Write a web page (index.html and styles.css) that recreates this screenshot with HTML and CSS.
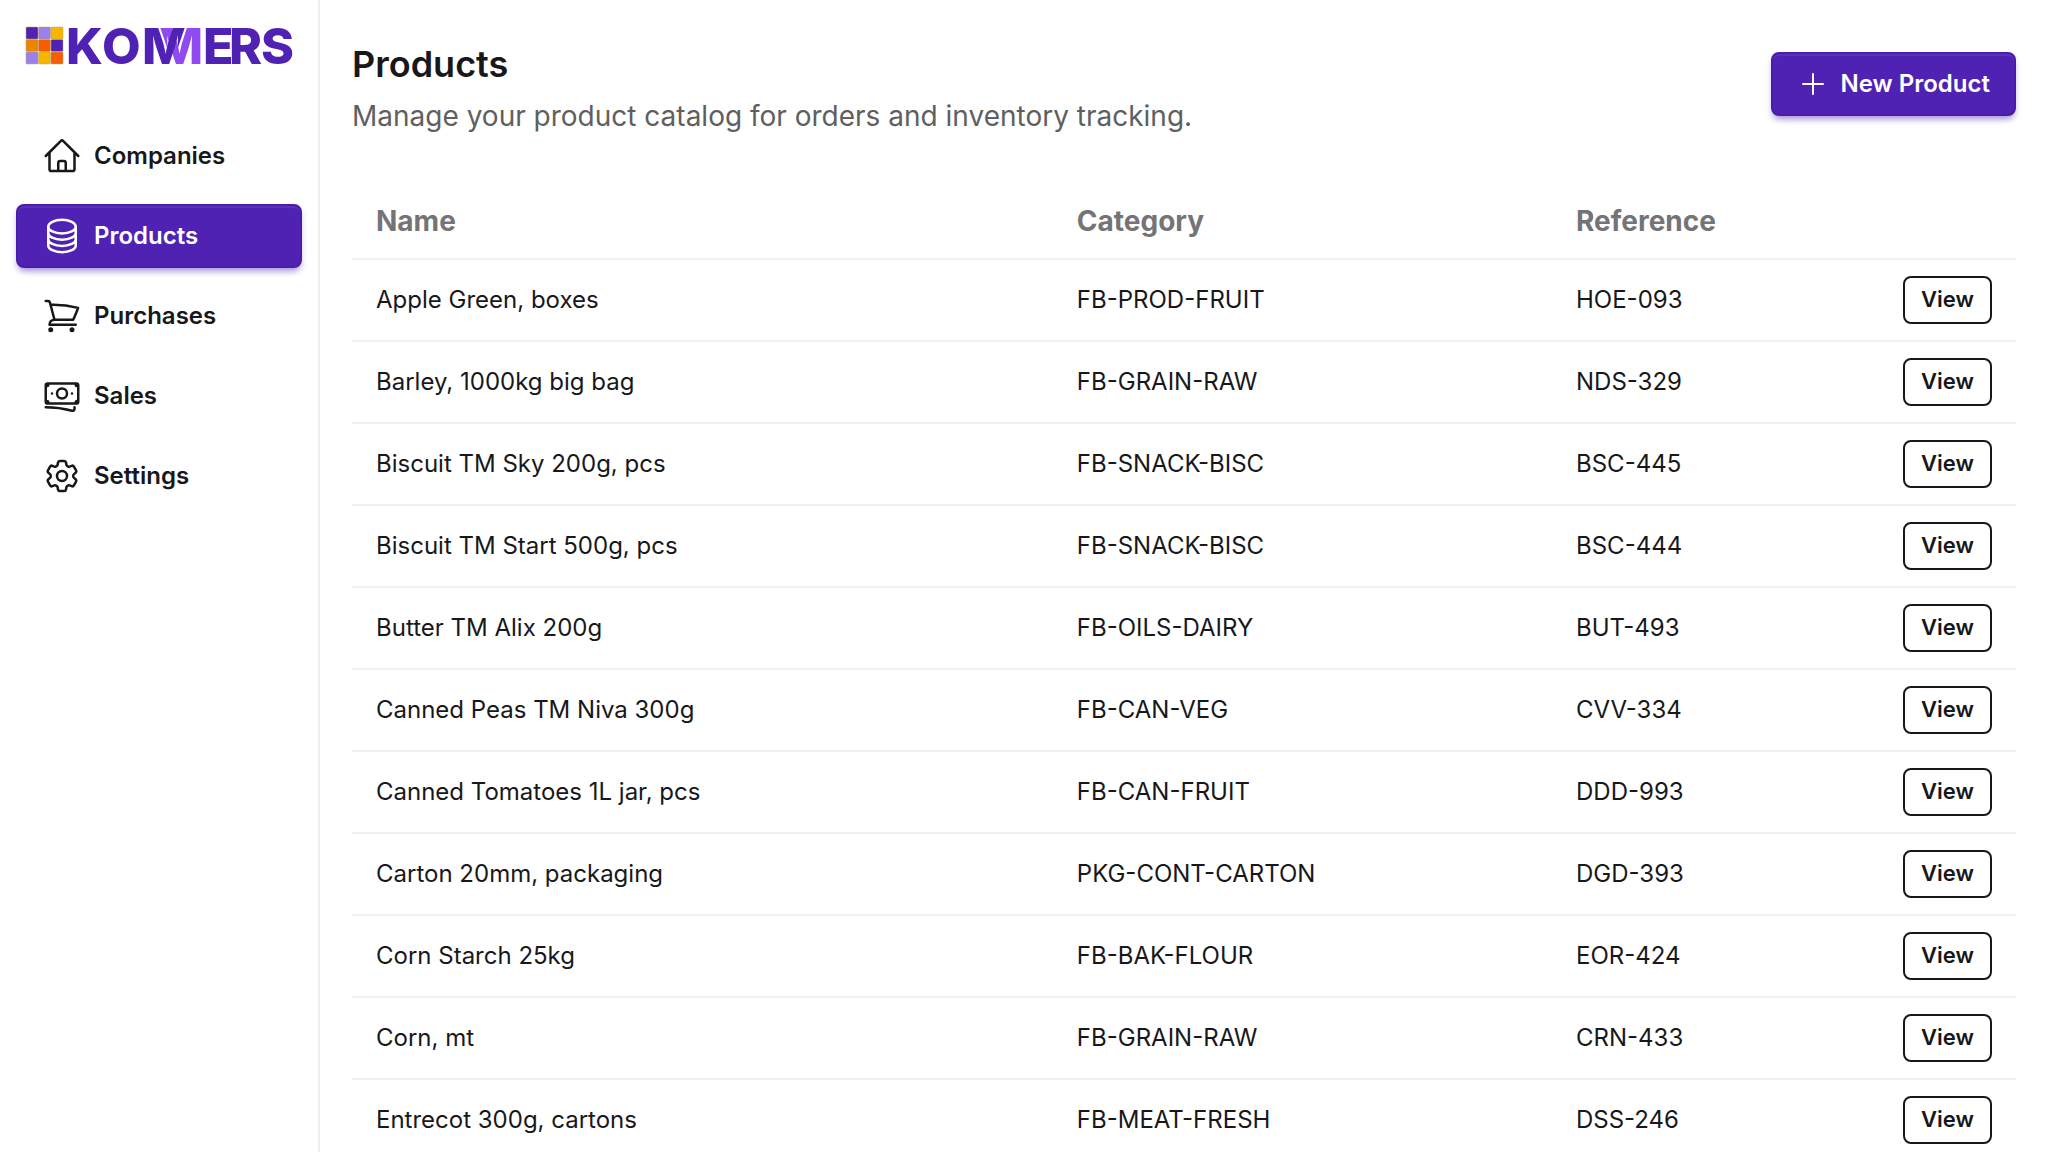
FILE: index.html
```html
<!DOCTYPE html>
<html lang="en">

<head>
    <meta charset="utf-8">
    <meta name="viewport" content="width=device-width, initial-scale=1.0">
    <title>Products - Kommers</title>
    <link rel="stylesheet" href="styles.css">
</head>

<body>
    <aside class="sidebar">
        <a class="logo" href="#" aria-label="Kommers">
            <svg width="270" height="38" viewBox="0 0 270 38">
                <defs>
                    <clipPath id="left-m">
                        <path d="M116 0H159L146 38H116z" />
                    </clipPath>
                    <clipPath id="right-m">
                        <path d="M134 0H178V38H147z" />
                    </clipPath>
                </defs>
                <g stroke="#b9a06a" stroke-width="0.5">
                    <rect x="0" y="0" width="12" height="12" rx="1" fill="#5022b4" />
                    <rect x="12.5" y="0" width="12" height="12" rx="1" fill="#9a80ea" />
                    <rect x="25" y="0" width="12" height="12" rx="1" fill="#f7b500" />
                    <rect x="0" y="12.5" width="12" height="12" rx="1" fill="#ea8500" />
                    <rect x="12.5" y="12.5" width="12" height="12" rx="1" fill="#f65d00" />
                    <rect x="25" y="12.5" width="12" height="12" rx="1" fill="#5022b4" />
                    <rect x="0" y="25" width="12" height="12" rx="1" fill="#9a80ea" />
                    <rect x="12.5" y="25" width="12" height="12" rx="1" fill="#f7b500" />
                    <rect x="25" y="25" width="12" height="12" rx="1" fill="#f65d00" />
                </g>
                <g class="logo-text">
                    <text x="40" y="37">K</text>
                    <text x="76" y="37">O</text>
                    <g clip-path="url(#right-m)"><text class="logo-light" x="130" y="37">M</text></g>
                    <g clip-path="url(#left-m)"><text x="116" y="37">M</text></g>
                    <text x="177" y="37">E</text>
                    <text x="203" y="37">R</text>
                    <text x="235" y="37">S</text>
                </g>
            </svg>
        </a>
        <nav class="menu">
            <a href="#">
                <svg class="icon" viewBox="0 0 24 24"><path d="m2.25 12 8.954-8.955c.44-.439 1.152-.439 1.591 0L21.75 12M4.5 9.75v10.125c0 .621.504 1.125 1.125 1.125H9.75v-4.875c0-.621.504-1.125 1.125-1.125h2.25c.621 0 1.125.504 1.125 1.125V21h4.125c.621 0 1.125-.504 1.125-1.125V9.75M8.25 21h8.25" /></svg>
                Companies
            </a>
            <a class="active" href="#">
                <svg class="icon" viewBox="0 0 24 24"><path d="M20.25 6.375c0 2.278-3.694 4.125-8.25 4.125S3.75 8.653 3.75 6.375m16.5 0c0-2.278-3.694-4.125-8.25-4.125S3.75 4.097 3.75 6.375m16.5 0v11.25c0 2.278-3.694 4.125-8.25 4.125s-8.25-1.847-8.25-4.125V6.375m16.5 0v3.75m-16.5-3.75v3.75m16.5 0v3.75C20.25 16.153 16.556 18 12 18s-8.25-1.847-8.25-4.125v-3.75m16.5 0c0 2.278-3.694 4.125-8.25 4.125s-8.25-1.847-8.25-4.125" /></svg>
                Products
            </a>
            <a href="#">
                <svg class="icon" viewBox="0 0 24 24"><path d="M2.25 3h1.386c.51 0 .955.343 1.087.835l.383 1.437M7.5 14.25a3 3 0 0 0-3 3h15.75m-12.75-3h11.218c1.121-2.3 2.1-4.684 2.924-7.138a60.114 60.114 0 0 0-16.536-1.84M7.5 14.25 5.106 5.272M6 20.25a.75.75 0 1 1-1.5 0 .75.75 0 0 1 1.5 0Zm12.75 0a.75.75 0 1 1-1.5 0 .75.75 0 0 1 1.5 0Z" /></svg>
                Purchases
            </a>
            <a href="#">
                <svg class="icon" viewBox="0 0 24 24"><path d="M2.25 18.75a60.07 60.07 0 0 1 15.797 2.101c.727.198 1.453-.342 1.453-1.096V18.75M3.75 4.5v.75A.75.75 0 0 1 3 6h-.75m0 0v-.375c0-.621.504-1.125 1.125-1.125H20.25M2.25 6v9m18-10.5v.75c0 .414.336.75.75.75h.75m-1.5-1.5h.375c.621 0 1.125.504 1.125 1.125v9.75c0 .621-.504 1.125-1.125 1.125h-.375m1.5-1.5H21a.75.75 0 0 0-.75.75v.75m0 0H3.75m0 0h-.375a1.125 1.125 0 0 1-1.125-1.125V15m1.5 1.5v-.75A.75.75 0 0 0 3 15h-.75M15 10.5a3 3 0 1 1-6 0 3 3 0 0 1 6 0Zm3 0h.008v.008H18V10.5Zm-12 0h.008v.008H6V10.5Z" /></svg>
                Sales
            </a>
            <a href="#">
                <svg class="icon" viewBox="0 0 24 24"><path d="M9.594 3.94c.09-.542.56-.94 1.11-.94h2.593c.55 0 1.02.398 1.11.94l.213 1.281c.063.374.313.686.645.87.074.04.147.083.22.127.325.196.72.257 1.075.124l1.217-.456a1.125 1.125 0 0 1 1.37.49l1.296 2.247a1.125 1.125 0 0 1-.26 1.431l-1.003.827c-.293.241-.438.613-.43.992a7.723 7.723 0 0 1 0 .255c-.008.378.137.75.43.991l1.004.827c.424.35.534.955.26 1.43l-1.298 2.247a1.125 1.125 0 0 1-1.369.491l-1.217-.456c-.355-.133-.75-.072-1.076.124a6.47 6.47 0 0 1-.22.128c-.331.183-.581.495-.644.869l-.213 1.281c-.09.543-.56.94-1.11.94h-2.594c-.55 0-1.019-.398-1.11-.94l-.213-1.281c-.062-.374-.312-.686-.644-.87a6.52 6.52 0 0 1-.22-.127c-.325-.196-.72-.257-1.076-.124l-1.217.456a1.125 1.125 0 0 1-1.369-.49l-1.297-2.247a1.125 1.125 0 0 1 .26-1.431l1.004-.827c.292-.24.437-.613.43-.991a6.932 6.932 0 0 1 0-.255c.007-.38-.138-.751-.43-.992l-1.004-.827a1.125 1.125 0 0 1-.26-1.43l1.297-2.247a1.125 1.125 0 0 1 1.37-.491l1.216.456c.356.133.751.072 1.076-.124.072-.044.146-.086.22-.128.332-.183.582-.495.644-.869l.214-1.28Z" /><path d="M15 12a3 3 0 1 1-6 0 3 3 0 0 1 6 0Z" /></svg>
                Settings
            </a>
        </nav>
    </aside>

    <main>
        <header>
            <div>
                <h1>Products</h1>
                <p>Manage your product catalog for orders and inventory tracking.</p>
            </div>
            <button class="new">
                <svg class="icon plus" viewBox="0 0 24 24"><path d="M12 4.5v15m7.5-7.5h-15" /></svg>
                New Product
            </button>
        </header>

        <table>
            <thead>
                <tr>
                    <th>Name</th>
                    <th class="category">Category</th>
                    <th class="reference">Reference</th>
                    <th class="action"></th>
                </tr>
            </thead>
            <tbody>
                <tr>
                    <td>Apple Green, boxes</td>
                    <td>FB-PROD-FRUIT</td>
                    <td>HOE-093</td>
                    <td><button class="view">View</button></td>
                </tr>
                <tr>
                    <td>Barley, 1000kg big bag</td>
                    <td>FB-GRAIN-RAW</td>
                    <td>NDS-329</td>
                    <td><button class="view">View</button></td>
                </tr>
                <tr>
                    <td>Biscuit TM Sky 200g, pcs</td>
                    <td>FB-SNACK-BISC</td>
                    <td>BSC-445</td>
                    <td><button class="view">View</button></td>
                </tr>
                <tr>
                    <td>Biscuit TM Start 500g, pcs</td>
                    <td>FB-SNACK-BISC</td>
                    <td>BSC-444</td>
                    <td><button class="view">View</button></td>
                </tr>
                <tr>
                    <td>Butter TM Alix 200g</td>
                    <td>FB-OILS-DAIRY</td>
                    <td>BUT-493</td>
                    <td><button class="view">View</button></td>
                </tr>
                <tr>
                    <td>Canned Peas TM Niva 300g</td>
                    <td>FB-CAN-VEG</td>
                    <td>CVV-334</td>
                    <td><button class="view">View</button></td>
                </tr>
                <tr>
                    <td>Canned Tomatoes 1L jar, pcs</td>
                    <td>FB-CAN-FRUIT</td>
                    <td>DDD-993</td>
                    <td><button class="view">View</button></td>
                </tr>
                <tr>
                    <td>Carton 20mm, packaging</td>
                    <td>PKG-CONT-CARTON</td>
                    <td>DGD-393</td>
                    <td><button class="view">View</button></td>
                </tr>
                <tr>
                    <td>Corn Starch 25kg</td>
                    <td>FB-BAK-FLOUR</td>
                    <td>EOR-424</td>
                    <td><button class="view">View</button></td>
                </tr>
                <tr>
                    <td>Corn, mt</td>
                    <td>FB-GRAIN-RAW</td>
                    <td>CRN-433</td>
                    <td><button class="view">View</button></td>
                </tr>
                <tr>
                    <td>Entrecot 300g, cartons</td>
                    <td>FB-MEAT-FRESH</td>
                    <td>DSS-246</td>
                    <td><button class="view">View</button></td>
                </tr>
            </tbody>
        </table>
    </main>
</body>

</html>
```
FILE: styles.css
```css
* {
    box-sizing: border-box;
}

body {
    margin: 0;
    height: 100vh;
    display: flex;
    font-family: Inter, sans-serif;
    font-size: 24px;
    line-height: 36px;
    color: #18181b;
    background-color: #fff;
}

.sidebar {
    width: 320px;
    flex-shrink: 0;
    padding: 27px 16px;
    border-right: 2px solid #eeeeee;
}

.logo {
    display: block;
    padding-left: 10px;
}

.logo svg {
    display: block;
    overflow: visible;
}

.logo-text {
    font-size: 50px;
    font-weight: 800;
    fill: #4f22b4;
}

.logo-light {
    fill: #8f4bee;
}

.menu {
    display: flex;
    flex-direction: column;
    gap: 16px;
    margin-top: 59px;
}

.menu a {
    display: flex;
    align-items: center;
    gap: 12px;
    height: 64px;
    padding: 0 26px;
    border-radius: 8px;
    font-weight: 600;
    color: #18181b;
    text-decoration: none;
}

.icon {
    width: 40px;
    height: 40px;
    fill: none;
    stroke: currentColor;
    stroke-width: 1.5;
    stroke-linecap: round;
    stroke-linejoin: round;
}

.menu .active,
.new {
    color: #fff;
    background-color: #4f22b4;
    border: 2px solid #4a1da9;
    box-shadow: inset 0 2px 0 #5b31bb, 0 6px 6px -4px rgba(79, 34, 180, 0.4), 0 4px 6px rgba(79, 34, 180, 0.2);
}

.menu .active {
    padding: 0 24px;
}

main {
    flex: 1;
    padding: 32px 32px 0 32px;
    overflow-y: auto;
    scrollbar-width: none;
}

header {
    display: flex;
    justify-content: space-between;
    align-items: center;
    margin-bottom: 48px;
}

h1 {
    margin: 0;
    font-size: 36px;
    font-weight: 600;
    line-height: 64px;
}

header p {
    margin: 0;
    font-size: 28px;
    line-height: 40px;
    color: #5f5f61;
}

button {
    font-family: inherit;
    font-weight: 600;
    cursor: pointer;
}

.new {
    display: flex;
    align-items: center;
    gap: 12px;
    height: 64px;
    padding: 0 24px;
    border-radius: 8px;
    font-size: 24px;
    line-height: 36px;
}

.plus {
    width: 32px;
    height: 32px;
}

table {
    width: 100%;
    table-layout: fixed;
    border-collapse: separate;
    border-spacing: 0;
    text-align: left;
}

th,
td {
    padding: 16px 24px;
    border-bottom: 2px solid #f0f0f0;
}

th {
    height: 76px;
    font-size: 28px;
    line-height: 42px;
    color: #747476;
}

.category {
    width: 30%;
}

.reference {
    width: 327px;
}

.action {
    width: 137px;
}

.view {
    display: block;
    width: 100%;
    height: 48px;
    padding: 0 0 2px;
    border: 2px solid #18181b;
    border-radius: 8px;
    font-size: 22px;
    color: #18181b;
    background-color: #fff;
}
```
